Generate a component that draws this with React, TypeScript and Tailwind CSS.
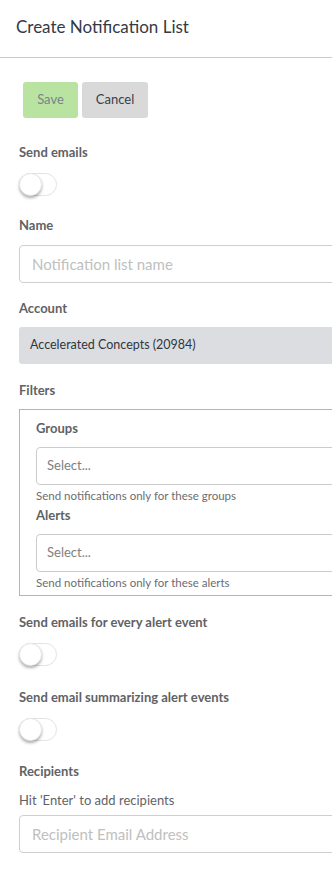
import React from "react";

function Toggle() {
  return (
    <div className="relative h-[23px] w-[38px] rounded-full border border-[#e3e3e3] bg-white">
      <div className="absolute left-[-1px] top-[-1px] h-[23px] w-[23px] rounded-full border border-[#e6e6e6] bg-white shadow-[0_2px_3px_rgba(0,0,0,0.3)]" />
    </div>
  );
}

function Label({ children }: { children: React.ReactNode }) {
  return <div className="text-[13px] font-bold leading-[18px] text-[#606266]">{children}</div>;
}

function SelectBox() {
  return (
    <div className="flex h-[38px] w-[340px] items-center rounded-[4px] border border-[#cccccc] bg-white pl-[10px]">
      <span className="flex-1 text-[13px] text-[#808080]">Select...</span>
      <div className="mr-[36px] h-[18px] w-px bg-[#cccccc]" />
    </div>
  );
}

export default function App() {
  return (
    <div className="w-[332px] overflow-hidden bg-white font-['Lato',sans-serif] h-[894px]">
      <div className="flex h-[58px] items-center border-b border-[#c9ccd3] pl-[16px] pb-[4px]">
        <h1 className="text-[17px] leading-none text-[#333a45]">Create Notification List</h1>
      </div>
      <div className="pl-[19px] pt-[24px]">
        <div className="flex gap-[4px] pl-[4px]">
          <button className="h-[36px] w-[55px] rounded-[3px] bg-[#b9e3a1] text-[13px] text-[#7a8389]">Save</button>
          <button className="h-[36px] w-[66px] rounded-[3px] bg-[#dad9da] text-[13px] text-[#35404c]">Cancel</button>
        </div>

        <div className="mt-[25px]"><Label>Send emails</Label></div>
        <div className="mt-[12px]"><Toggle /></div>

        <div className="mt-[20px]"><Label>Name</Label></div>
        <div className="mt-[11px] flex h-[38px] w-[340px] items-center rounded-[4px] border border-[#cfcfcf] pl-[12px] text-[15px] text-[#c0c0c0]">
          Notification list name
        </div>

        <div className="mt-[16px]"><Label>Account</Label></div>
        <div className="mt-[10px] flex h-[37px] w-[340px] items-center rounded-[3px] bg-[#dcdde0] pl-[11px] text-[12.5px] text-[#2f3640]">
          Accelerated Concepts (20984)
        </div>

        <div className="mt-[17px]"><Label>Filters</Label></div>
        <div className="mt-[10px] w-[340px] border border-[#b5b5b5] pl-[16px] pt-[9px] pb-[5px]">
          <Label>Groups</Label>
          <div className="mt-[10px]"><SelectBox /></div>
          <div className="mt-[4px] text-[11.5px] leading-[14px] text-[#6a6d72]">Send notifications only for these groups</div>
          <div className="mt-[3px]"><Label>Alerts</Label></div>
          <div className="mt-[10px]"><SelectBox /></div>
          <div className="mt-[4px] text-[11.5px] leading-[14px] text-[#6a6d72]">Send notifications only for these alerts</div>
        </div>

        <div className="mt-[17px]"><Label>Send emails for every alert event</Label></div>
        <div className="mt-[12px]"><Toggle /></div>

        <div className="mt-[22px]"><Label>Send email summarizing alert events</Label></div>
        <div className="mt-[12px]"><Toggle /></div>

        <div className="mt-[21px]"><Label>Recipients</Label></div>
        <div className="mt-[12px] text-[13px] leading-[16px] text-[#5f6368]">Hit &#39;Enter&#39; to add recipients</div>
        <div className="mt-[7px] flex h-[38px] w-[340px] items-center rounded-[4px] border border-[#cfcfcf] pl-[12px] text-[15px] text-[#c0c0c0]">
          Recipient Email Address
        </div>
      </div>
    </div>
  );
}
